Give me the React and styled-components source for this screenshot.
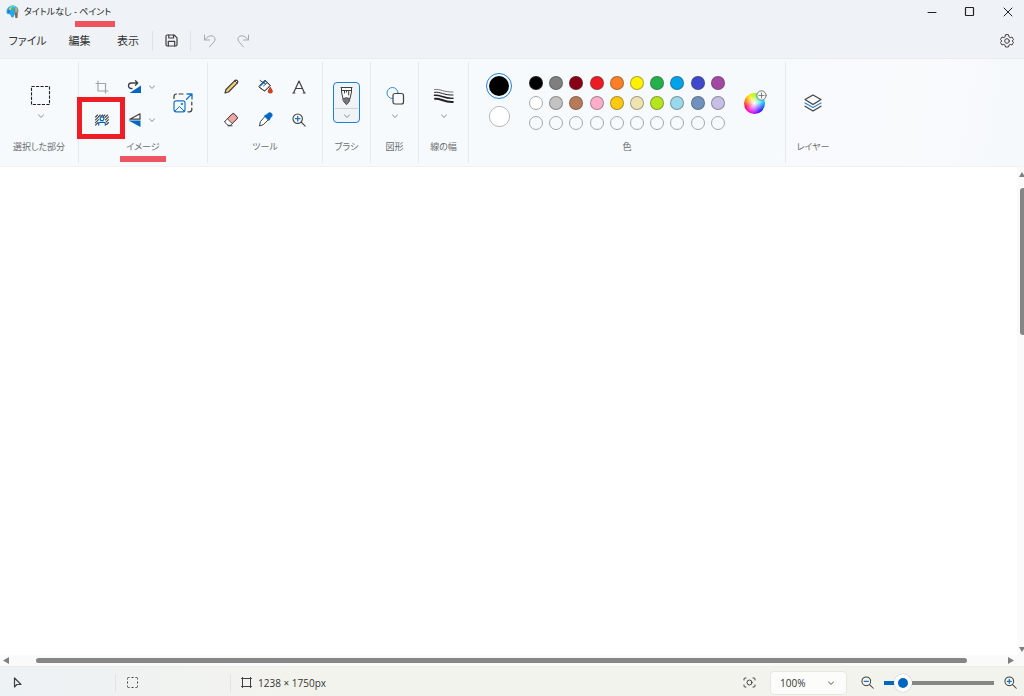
import React, { useState } from 'react';
import styled, { createGlobalStyle } from 'styled-components';

const blue = '#0067c0';
const ink = '#404040';

const GlobalStyle = createGlobalStyle`
  * { box-sizing: border-box; }
  body {
    margin: 0;
    font-family: "Open Sans", "Noto Sans CJK JP", sans-serif;
    font-feature-settings: "palt";
    color: #333;
    background: #fff;
  }
  button, input, select { font: inherit; color: inherit; font-feature-settings: inherit; }
  svg { display: block; flex: none; overflow: visible; }
`;

const Window = styled.div`
  display: flex;
  flex-direction: column;
  min-height: 100vh;
`;

const TitleBar = styled.header`
  display: flex;
  align-items: center;
  height: 23px;
  padding-left: 6px;
  background: #eff3f8;
`;

const Title = styled.h1`
  flex: 1;
  margin: 0 0 0 5px;
  font-size: 9px;
  line-height: 20px;
  font-weight: 400;
  color: #222;
`;

const Marked = styled.span`
  position: relative;
  display: inline-block;
  &::after {
    content: "";
    position: absolute;
    left: 50%;
    top: ${p => p.$drop}px;
    width: ${p => p.$width}px;
    height: 6px;
    margin-left: ${p => p.$width / -2}px;
    background: #ef5561;
    z-index: 2;
  }
`;

const PlainButton = styled.button`
  display: flex;
  align-items: center;
  justify-content: center;
  padding: 0;
  border: 0;
  background: none;
`;

const WindowControls = styled.div`
  display: flex;
  gap: 6px;
`;

const WindowButton = styled(PlainButton)`
  width: 32px;
  height: 23px;
`;

const MenuBar = styled.nav`
  display: flex;
  align-items: center;
  height: 36px;
  padding: 0 7px 0 0;
  background: #eff3f8;
  border-bottom: 1px solid #e9edf1;
`;

const MenuItem = styled(PlainButton)`
  width: ${p => p.$width}px;
  height: 28px;
  font-size: 11px;
  line-height: 20px;
  white-space: nowrap;
`;

const MenuIcon = styled(PlainButton)`
  width: ${p => p.$width || 33}px;
  height: 28px;
`;

const MenuDivider = styled.span`
  width: 1px;
  height: 20px;
  background: #dfe3e8;
`;

const Spacer = styled.span`
  flex: 1;
`;

const Ribbon = styled.section`
  display: flex;
  height: 108px;
  padding: 3px 0;
  background: linear-gradient(100deg, #f6fafd 0%, #f6fafd 70%, #f9fafc 88%, #f5f9fc 100%);
  border-bottom: 1px solid #f1f2f4;
`;

const Group = styled.div`
  display: flex;
  flex-direction: column;
  flex: none;
  width: ${p => p.$width}px;
  border-right: ${p => (p.$last ? '0' : '1px solid #e6eaee')};
`;

const GroupBody = styled.div`
  display: flex;
  justify-content: center;
  height: 75px;
  padding: ${p => p.$top || 0}px 0 0 ${p => p.$left || 0}px;
`;

const GroupLabel = styled.div`
  font-size: 9px;
  line-height: 20px;
  text-align: center;
  white-space: nowrap;
  color: #6a6d71;
`;

const StackButton = styled(PlainButton)`
  flex-direction: column;
  justify-content: flex-start;
  gap: 6px;
  width: 32px;
  height: 36px;
`;

const ToolGrid = styled.div`
  display: grid;
  grid-template-columns: ${p => p.$columns};
  grid-template-rows: 33px 33px;
`;

const ToolButton = styled(PlainButton)`
  position: relative;
  grid-row: ${p => (p.$tall ? '1 / span 2' : 'auto')};
  grid-column: ${p => (p.$tall ? 3 : 'auto')};
  gap: 7px;
`;

const HighlightFrame = styled.span`
  position: absolute;
  inset: -6px -7px -3px -9px;
  border: 5px solid #ee1c25;
  z-index: 2;
`;

const BrushButton = styled(PlainButton)`
  flex-direction: column;
  width: 27px;
  height: 41px;
  border: 1px solid #1c7fd6;
  border-radius: 4px;
  background: #f1f4f7;
`;

const BrushFace = styled.span`
  display: flex;
  align-items: center;
  justify-content: center;
  width: 23px;
  height: 26px;
  border-bottom: 1px solid #cfd2d5;
`;

const BrushMore = styled.span`
  display: flex;
  align-items: center;
  height: 13px;
`;

const ColorBody = styled.div`
  display: flex;
  gap: 14px;
  height: 75px;
  padding: 11px 0 0 17px;
`;

const ActiveColors = styled.div`
  display: flex;
  flex-direction: column;
  align-items: center;
  gap: 7px;
  width: 26px;
`;

const ActiveColor = styled.button`
  width: ${p => p.$size}px;
  height: ${p => p.$size}px;
  padding: ${p => (p.$selected ? 2 : 0)}px;
  border: 1px solid ${p => (p.$selected ? '#1c7fd6' : '#a9adb1')};
  border-radius: 50%;
  background: transparent;
  &::before {
    content: "";
    display: block;
    width: 100%;
    height: 100%;
    border-radius: 50%;
    background: ${p => p.$color};
  }
`;

const Palette = styled.div`
  display: grid;
  grid-template-columns: repeat(10, 1fr);
  grid-auto-rows: 20px;
  place-items: center;
  width: 202px;
  height: 60px;
`;

const Swatch = styled.button`
  width: 14px;
  height: 14px;
  padding: 0;
  border: 1px solid ${p => (p.$color === 'transparent' || p.$color === '#ffffff' ? '#a4a8ab' : 'rgba(70, 70, 70, 0.45)')};
  border-radius: 50%;
  background: ${p => p.$color};
`;

const WheelButton = styled(PlainButton)`
  position: relative;
  width: 24px;
  height: 60px;
`;

const Wheel = styled.span`
  width: 21px;
  height: 21px;
  border-radius: 50%;
  background:
    radial-gradient(circle, #fff 0%, rgba(255, 255, 255, 0.5) 35%, rgba(255, 255, 255, 0) 70%),
    conic-gradient(from 0deg, #a6ff00, #00ff7a, #00e5ff, #0062ff, #2a00ff, #b400ff, #ff00c8, #ff0040, #ff7a00, #ffe100, #a6ff00);
`;

const WheelPlus = styled.span`
  position: absolute;
  top: 17px;
  right: -1px;
`;

const Workspace = styled.main`
  display: flex;
  flex: 1;
  min-height: 200px;
`;

const Paper = styled.div`
  flex: 1;
  background: #fff;
`;

const VerticalBar = styled.div`
  display: flex;
  flex-direction: column;
  align-items: flex-end;
  width: 7px;
  padding: 5px 0 3px;
  background: #fafafa;
`;

const VerticalTrack = styled.div`
  flex: 1;
  width: 4px;
  padding-top: 11px;
`;

const VerticalThumb = styled.div`
  height: 32%;
  border-radius: 3px 0 0 3px;
  background: #868686;
`;

const HorizontalBar = styled.div`
  display: flex;
  align-items: center;
  height: 11px;
  padding: 0 10px 0 3px;
  background: #fafafa;
`;

const HorizontalTrack = styled.div`
  flex: 1;
  padding: 0 41px 0 27px;
`;

const HorizontalThumb = styled.div`
  height: 5px;
  border-radius: 3px;
  background: #868686;
`;

const StatusBar = styled.footer`
  display: flex;
  align-items: center;
  height: 30px;
  padding: 2px 7px 0 11px;
  font-size: 10px;
  line-height: 16px;
  background: linear-gradient(90deg, #edf2f5 0%, #f3f3ee 28%, #f3f3ee 100%);
  border-top: 1px solid #ececea;
`;

const StatusCell = styled.div`
  display: flex;
  align-items: center;
  gap: 6px;
  width: ${p => p.$width}px;
  height: 18px;
  padding-left: ${p => p.$inset || 0}px;
  border-right: ${p => (p.$last ? '0' : '1px solid #e2e4e2')};
  white-space: nowrap;
`;

const ZoomGroup = styled.div`
  display: flex;
  align-items: center;
`;

const SelectWrap = styled.label`
  display: flex;
  align-items: center;
  position: relative;
  margin: 0 14px;
`;

const ZoomSelect = styled.select`
  appearance: none;
  width: 77px;
  height: 24px;
  padding: 0 24px 0 9px;
  border: 1px solid #e6e6e2;
  border-radius: 4px;
  background: #fcfcfb;
`;

const SelectArrow = styled.span`
  position: absolute;
  right: 12px;
  pointer-events: none;
`;

const ZoomSlider = styled.input`
  appearance: none;
  width: 110px;
  height: 18px;
  margin: 0 10px;
  background: linear-gradient(90deg, ${blue} 0 16%, #868686 16% 100%) center / 100% 4px no-repeat;
  &::-webkit-slider-thumb {
    appearance: none;
    width: 18px;
    height: 18px;
    border: 4px solid #fff;
    border-radius: 50%;
    background: ${blue};
    box-shadow: 0 0 1px #999;
  }
`;

function Svg({ w = 16, h = w, box, children, color = ink, sw = 1 }) {
  return (
    <svg width={w} height={h} viewBox={box || `0 0 ${w} ${h}`} fill="none" stroke={color}
      strokeWidth={sw} strokeLinecap="round" strokeLinejoin="round" aria-hidden="true">
      {children}
    </svg>
  );
}

const Chevron = ({ w = 6, color = '#8b8e91' }) => (
  <Svg w={w} h={8} box="0 0 6 8" color={color}><path d="M.5 3 3 5.4 5.5 3" /></Svg>
);

const AppLogo = () => (
  <Svg w={13} h={14}>
    <path d="M6.500.5C10.500.5 12.500 3 12.500 6c0 2-1.500 3-3 3C8 9 8.500 12 6.500 12.500 5 12.800 5 10.500 4 9.500 2.800 8.800.5 9.500.5 7 .5 3.500 3 .5 6.500.5Z" fill="#26a9e8" stroke="none" />
    <path d="M3 2Q6-.5 10 1.500L8 4Z" fill="#5fd0f4" stroke="none" />
    <circle cx="2.800" cy="6.500" r="1.200" fill="#2a6fc0" stroke="none" />
    <circle cx="4.200" cy="3.700" r="1.200" fill="#f4c534" stroke="none" />
    <circle cx="7.300" cy="3" r="1.200" fill="#4fb65b" stroke="none" />
    <path d="M10.300 3.200v4" stroke="#e1a04b" strokeWidth="2" />
    <path d="M8.800 7.500h3l-.3 5.500H9.300Z" fill="#8a6547" stroke="none" />
  </Svg>
);

const SaveIcon = () => (
  <Svg w={13} sw={1.2}>
    <path d="M1 2.200Q1 1 2.200 1h7L12 3.800v7q0 1.200-1.200 1.200H2.200Q1 12 1 10.800Z" />
    <path d="M3.800 1v3h4.700V1M3.300 12V7.300h6.400V12" />
  </Svg>
);

const UndoIcon = () => (
  <Svg w={13} h={14} color="#a6aab0">
    <path d="M1.500 1v5h5M1.500 6C4 3 6.500 1.500 9 1.800c3 .5 4 3.800 2 6L6.500 13" />
  </Svg>
);

const RedoIcon = () => (
  <Svg w={13} h={14} color="#a6aab0">
    <path d="M11.500 1v5h-5M11.500 6C9 3 6.500 1.500 4 1.800c-3 .5-4 3.800-2 6L6.500 13" />
  </Svg>
);

const GearIcon = () => (
  <Svg w={14}>
    <path d="m5.500 1-.5 1.900-1.200.7-1.900-.5L.5 5.600 1.800 7 .5 8.400l1.400 2.500 1.900-.5 1.200.7.5 1.900h3l.5-1.900 1.200-.7 1.900.5 1.400-2.500L12.200 7l1.300-1.400-1.400-2.500-1.900.5L9 2.900 8.500 1Z" />
    <circle cx="7" cy="7" r="2.300" />
  </Svg>
);

const SelectionIcon = () => (
  <Svg w={20}><rect x=".5" y=".5" width="18" height="18" strokeDasharray="3.200 1.300" strokeLinecap="butt" strokeWidth="1.100" stroke="#222" /></Svg>
);

const CropIcon = () => (
  <Svg w={14} color="#a2a5a8" sw={1.2}><path d="M3 1v10h10M1 3.500h9.500V13" /></Svg>
);

const RemoveBackgroundIcon = () => (
  <Svg w={14} h={12}>
    <path d="M.5 3 2.500 1M.5 5.800 5.300 1M.5 8.600 3.500 5.600M.5 11.200 3.200 8.500M5.800 2.800 7.600 1M8.200 2.500 9.700 1M10 3.500 12.500 1M10.500 5.800l3-3M11 8.200l2.500-2.500M11.500 10.500l2-2" stroke="#444" strokeWidth="1.100" />
    <circle cx="7" cy="4.700" r="1.900" stroke={blue} strokeWidth="1.200" fill="#fff" />
    <path d="M3.700 11.200V9.700Q3.700 8.300 5 8.300h4q1.300 0 1.300 1.400v1.500" stroke={blue} strokeWidth="1.200" fill="#fff" />
  </Svg>
);

const RotateIcon = () => (
  <Svg w={14}>
    <path d="M13 5.500V13H1.500Z" fill={blue} stroke="none" />
    <path d="M4 8.500H3C.8 8.500.5 6.500.5 5.700.5 4 2 3 3.500 3h6M7.500.8 9.700 3 7.500 5.200" strokeWidth="1.300" />
  </Svg>
);

const FlipIcon = () => (
  <Svg w={14}>
    <path d="M12.500 7.500H.5l12 6.500Z" fill={blue} stroke="none" />
    <path d="M12 .8v5.400H1.800Z" strokeWidth="1.200" />
  </Svg>
);

const ResizeIcon = () => (
  <Svg w={20}>
    <path d="M1 5.500V3.500Q1 1 3.500 1M6 1h4M18.800 9v3M18.800 15v1.500q0 2.300-2.300 2.300H15" strokeWidth="1.200" />
    <path d="M13.500 6.300l5.200-5.200M14 1h5v5" stroke="#1672c5" strokeWidth="1.300" />
    <rect x="1" y="7.800" width="11" height="11" rx="2" stroke="#1672c5" strokeWidth="1.200" />
    <path d="m2 18 4.500-4.500L11 18" stroke="#1672c5" /><circle cx="8.800" cy="11" r=".7" stroke="#1672c5" />
  </Svg>
);

const PencilIcon = () => (
  <Svg w={15}>
    <path d="M1 14 2 10.500 10.800 1.700Q12 .6 13.300 1.700q1 1.200 0 2.500L4.500 13Z" fill="#f1ce6d" strokeWidth="1.200" />
    <path d="m10.800 1.700 2.500 2.500Q14.400 3 13.300 1.700q-1.300-1.100-2.500 0Z" fill="#fff" />
  </Svg>
);

const BucketIcon = () => (
  <Svg w={15}>
    <path d="M1.200 7.200 7 1.300l5.200 5.200-4.700 4.800q-1 1-2 0L1.300 8.200Z" fill="#fff" />
    <path d="M3 4.800 6.500 1l1.500 1.500-5.500 5-1.500-.5Z" fill="#1672c5" stroke="none" />
    <path d="m5.500 7 4-3.500" stroke="#1672c5" />
    <path d="M2 1.500 7.500 5M7 1.300l5.200 5.200-4.700 4.800q-1 1-2 0L1.300 8.200" />
    <path d="M12.300 8.500q4.200 5.500 0 5.500t0-5.500Z" fill="#d84421" stroke="#b53518" />
  </Svg>
);

const TextIcon = () => (
  <Svg w={14} sw={1.2}><path d="M1.500 13 7 1l5.500 12M3.500 8.500h7M.8 13h2M11.200 13h2" /></Svg>
);

const EraserIcon = () => (
  <Svg w={15}>
    <path d="M1 9.200 8.200 2q1-1 2 0L13 4.800q1 1 0 2L6.500 13.300H4L1 10.500Q.5 9.800 1 9.200Z" fill="#fff" />
    <path d="M3.700 6.500 8.200 2q1-1 2 0L13 4.800q1 1 0 2l-4.500 4.500Z" fill="#f6a5a5" />
    <path d="M4 13.800h4" />
  </Svg>
);

const PickerIcon = () => (
  <Svg w={15}>
    <path d="m7.500 4.500 3 3-5.300 5.200-3.700 1.300.8-4Z" fill="#fff" />
    <path d="m7 3.200 1.700-.7L10.500.9q1.500-1 3 .4t.5 3l-1.700 1.900-.7 1.700-1 .6L6.500 4.200Z" fill={blue} stroke={blue} strokeWidth=".5" />
  </Svg>
);

const Magnifier = ({ plus, w = 14 }) => (
  <Svg w={w} box="0 0 14 14" sw={1.1}>
    <circle cx="5.700" cy="5.700" r="4.700" /><path d="m9.200 9.200 4 4" />
    <path d={plus ? 'M3.500 5.700h4.400M5.700 3.500v4.400' : 'M3.500 5.700h4.400'} stroke="#1672c5" strokeWidth="1.300" />
  </Svg>
);

const BrushIcon = () => (
  <Svg w={13} h={20}>
    <path d="M1.500 1.500v4.500l1.500 6.500 7 0 1.500-6.500V1.500" fill="#fafafa" />
    <path d="M1 1.500h11M1.800 4.500h9.400M4.500 4.500v2.500M6.500 4.500V6M8.700 4.500v4.500" />
    <path d="M3 12.500q3.500-1.500 7 0l-.7 3-2.800 3.300-2.800-3.300Z" fill="#777" stroke="#555" />
  </Svg>
);

const ShapesIcon = () => (
  <Svg w={18} h={20}>
    <circle cx="6.500" cy="7" r="5.500" stroke="#3389d4" />
    <rect x="7" y="7.500" width="10.500" height="10.500" rx="2" fill="#f8fafc" strokeWidth="1.200" />
  </Svg>
);

const LinesIcon = () => (
  <Svg w={20} h={20} color="#222">
    <path d="M.5 3.500C6 2.500 10 6.500 19 6" strokeWidth=".6" />
    <path d="M.5 6.300C6 5.300 10 9.500 19 9" strokeWidth="1" />
    <path d="M.5 9.300C6 8.300 10 12.800 19 12.300" strokeWidth="1.400" />
    <path d="M1 12.800C6 11.800 10 16.500 18.800 16" strokeWidth="2" />
  </Svg>
);

const LayersIcon = () => (
  <Svg w={18} h={18}>
    <path d="m9 1 8 4.500L9 10.500 1 5.500Z" strokeWidth="1.200" />
    <path d="m1 9 8 4.500L17 9" stroke="#2f86d3" strokeWidth="1.200" />
    <path d="m1 12.200 8 4.800 8-4.800" strokeWidth="1.200" />
  </Svg>
);

const CircledPlus = () => (
  <Svg w={11}><circle cx="5.500" cy="5.500" r="4.700" fill="#f5f6f7" stroke="#777" /><path d="M3 5.500h5M5.500 3v5" stroke="#777" strokeWidth=".9" /></Svg>
);

const Triangle = ({ w, h, d }) => (
  <Svg w={w} h={h}><path d={d} fill="#808080" stroke="none" /></Svg>
);

const paletteColors = [
  '#000000', '#7f7f7f', '#880015', '#ed1c24', '#ff7f27', '#fff200', '#22b14c', '#00a2e8', '#3f48cc', '#a349a4',
  '#ffffff', '#c3c3c3', '#b97a57', '#ffaec9', '#ffc90e', '#efe4b0', '#b5e61d', '#99d9ea', '#7092be', '#c8bfe7',
  ...Array(10).fill('transparent'),
];

const tools = [
  ['鉛筆', PencilIcon], ['塗りつぶし', BucketIcon], ['テキスト', TextIcon],
  ['消しゴム', EraserIcon], ['色の選択', PickerIcon], ['拡大鏡', () => <Magnifier plus />],
];

export default function App() {
  const [zoom, setZoom] = useState(11);
  return (
    <Window>
      <GlobalStyle />
      <TitleBar>
        <AppLogo />
        <Title>タイトルなし - <Marked $width={40} $drop={19}>ペイント</Marked></Title>
        <WindowControls>
          <WindowButton aria-label="最小化"><Svg w={10} color="#222"><path d="M1 5.500h8" /></Svg></WindowButton>
          <WindowButton aria-label="最大化"><Svg w={10} color="#222"><rect x=".5" y=".5" width="8" height="8" rx=".5" strokeWidth="1.200" /></Svg></WindowButton>
          <WindowButton aria-label="閉じる"><Svg w={10} color="#222"><path d="m1 1 8 8M9 1 1 9" /></Svg></WindowButton>
        </WindowControls>
      </TitleBar>

      <MenuBar>
        <MenuItem $width={55}>ファイル</MenuItem>
        <MenuItem $width={49}>編集</MenuItem>
        <MenuItem $width={48}>表示</MenuItem>
        <MenuDivider />
        <MenuIcon $width={37} aria-label="保存"><SaveIcon /></MenuIcon>
        <MenuDivider />
        <MenuIcon $width={37} aria-label="元に戻す"><UndoIcon /></MenuIcon>
        <MenuIcon $width={30} aria-label="やり直し"><RedoIcon /></MenuIcon>
        <Spacer />
        <MenuIcon $width={20} aria-label="設定"><GearIcon /></MenuIcon>
      </MenuBar>

      <Ribbon>
        <Group $width={79}>
          <GroupBody $top={24} $left={3}>
            <StackButton aria-label="選択"><SelectionIcon /><Chevron /></StackButton>
          </GroupBody>
          <GroupLabel>選択した部分</GroupLabel>
        </Group>

        <Group $width={129}>
          <GroupBody $top={8} $left={2}>
            <ToolGrid $columns="32px 46px 38px">
              <ToolButton aria-label="トリミング"><CropIcon /></ToolButton>
              <ToolButton aria-label="回転"><RotateIcon /><Chevron /></ToolButton>
              <ToolButton $tall aria-label="サイズ変更"><ResizeIcon /></ToolButton>
              <ToolButton aria-label="背景の削除"><RemoveBackgroundIcon /><HighlightFrame /></ToolButton>
              <ToolButton aria-label="反転"><FlipIcon /><Chevron /></ToolButton>
            </ToolGrid>
          </GroupBody>
          <GroupLabel><Marked $width={46} $drop={19}>イメージ</Marked></GroupLabel>
        </Group>

        <Group $width={115}>
          <GroupBody $top={8}>
            <ToolGrid $columns="34px 34px 34px">
              {tools.map(([name, Icon]) => <ToolButton key={name} aria-label={name}><Icon /></ToolButton>)}
            </ToolGrid>
          </GroupBody>
          <GroupLabel>ツール</GroupLabel>
        </Group>

        <Group $width={48}>
          <GroupBody $top={20}>
            <BrushButton aria-label="ブラシ">
              <BrushFace><BrushIcon /></BrushFace>
              <BrushMore><Chevron /></BrushMore>
            </BrushButton>
          </GroupBody>
          <GroupLabel>ブラシ</GroupLabel>
        </Group>

        <Group $width={48}>
          <GroupBody $top={24}>
            <StackButton aria-label="図形"><ShapesIcon /><Chevron /></StackButton>
          </GroupBody>
          <GroupLabel>図形</GroupLabel>
        </Group>

        <Group $width={50}>
          <GroupBody $top={24}>
            <StackButton aria-label="線の幅"><LinesIcon /><Chevron /></StackButton>
          </GroupBody>
          <GroupLabel>線の幅</GroupLabel>
        </Group>

        <Group $width={317}>
          <ColorBody>
            <ActiveColors>
              <ActiveColor $size={26} $selected $color="#000" aria-label="色 1" />
              <ActiveColor $size={21} $color="#fff" aria-label="色 2" />
            </ActiveColors>
            <Palette>
              {paletteColors.map((c, i) => <Swatch key={i} $color={c} aria-label={`パレット ${i + 1}`} />)}
            </Palette>
            <WheelButton aria-label="色の編集"><Wheel /><WheelPlus><CircledPlus /></WheelPlus></WheelButton>
          </ColorBody>
          <GroupLabel>色</GroupLabel>
        </Group>

        <Group $width={54} $last>
          <GroupBody $top={32}>
            <StackButton aria-label="レイヤー"><LayersIcon /></StackButton>
          </GroupBody>
          <GroupLabel>レイヤー</GroupLabel>
        </Group>
      </Ribbon>

      <Workspace>
        <Paper />
        <VerticalBar>
          <Triangle w={5} h={5} d="M0 5 3 0 6 5Z" />
          <VerticalTrack><VerticalThumb /></VerticalTrack>
          <Triangle w={5} h={5} d="M0 0h6L3 5Z" />
        </VerticalBar>
      </Workspace>
      <HorizontalBar>
        <Triangle w={6} h={7} d="M6 0v7L0 3.500Z" />
        <HorizontalTrack><HorizontalThumb /></HorizontalTrack>
        <Triangle w={6} h={7} d="M0 0v7l6-3.500Z" />
      </HorizontalBar>

      <StatusBar>
        <StatusCell $width={105} $inset={2}>
          <Svg w={9} h={11} sw={1.200}><path d="M1.500 1v9l2.300-2.500H8Z" /></Svg>
        </StatusCell>
        <StatusCell $width={115} $inset={11}>
          <Svg w={11}><path d="M.5 2.500v-1q0-1 1-1h1M4.500.5h2M8.500.5h1q1 0 1 1v1M10.500 4.500v2M10.500 8.500v1q0 1-1 1h-1M6.500 10.500h-2M2.500 10.500h-1q-1 0-1-1v-1M.5 6.500v-2" strokeLinecap="butt" /></Svg>
        </StatusCell>
        <StatusCell $width={110} $inset={10} $last>
          <Svg w={11}><path d="M1.500.5v10M9.500.5v10M.5 1.500h10M.5 9.500h10" /></Svg>
          1238 × 1750px
        </StatusCell>
        <Spacer />
        <ZoomGroup>
          <PlainButton aria-label="ウィンドウに合わせる">
            <Svg w={13} h={11}><path d="M1 3V2q0-1 1-1h1M10 1h1q1 0 1 1v1M12 8v1q0 1-1 1h-1M3 10H2q-1 0-1-1V8" /><circle cx="6.500" cy="5.500" r="2.500" /></Svg>
          </PlainButton>
          <SelectWrap>
            <ZoomSelect aria-label="ズーム" defaultValue="100%"><option>100%</option><option>200%</option></ZoomSelect>
            <SelectArrow><Chevron w={8} color="#555" /></SelectArrow>
          </SelectWrap>
          <PlainButton aria-label="縮小"><Magnifier w={13} /></PlainButton>
          <ZoomSlider type="range" aria-label="ズーム倍率" min="0" max="100" value={zoom} onChange={e => setZoom(Number(e.target.value))} />
          <PlainButton aria-label="拡大"><Magnifier plus w={13} /></PlainButton>
        </ZoomGroup>
      </StatusBar>
    </Window>
  );
}
